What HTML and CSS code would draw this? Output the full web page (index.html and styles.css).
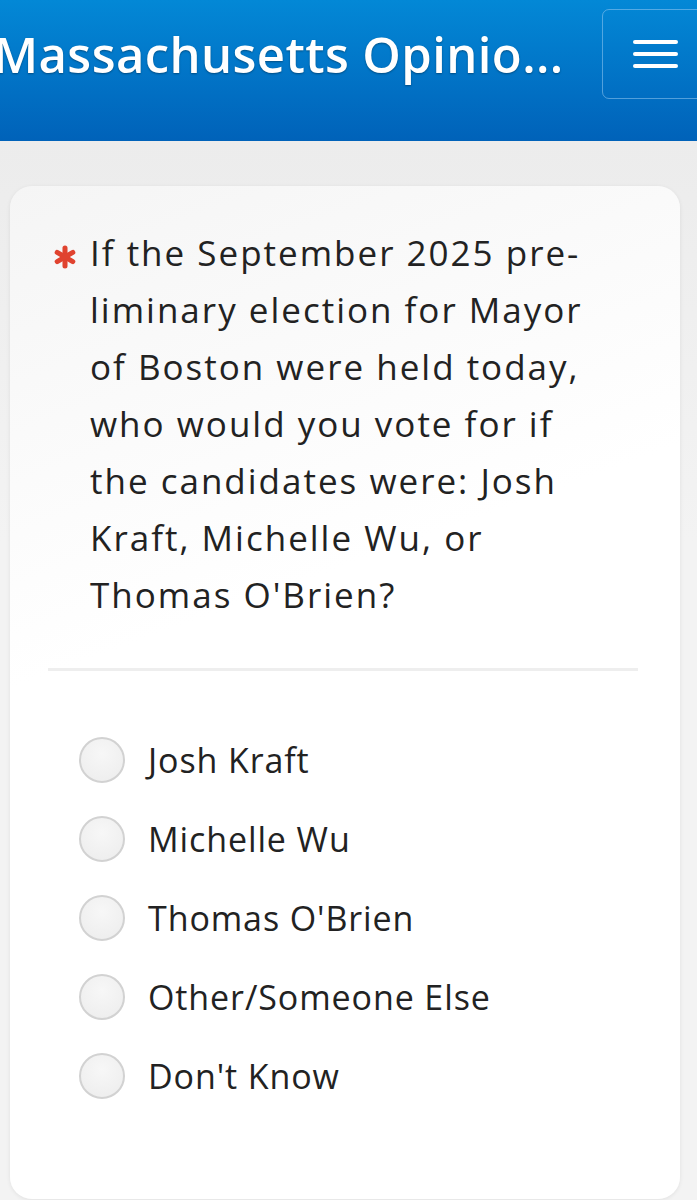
FILE: index.html
```html
<!DOCTYPE html>
<html>
<head>
<meta charset="utf-8">
<link rel="stylesheet" href="styles.css">
</head>
<body>
<header class="topbar">
  <div class="title">Massachusetts Opinio...</div>
  <button class="menu-btn" aria-label="Menu">
    <span class="bar"></span><span class="bar"></span><span class="bar"></span>
  </button>
</header>
<main class="page">
  <section class="card">
    <div class="question">
      <span class="req">
        <svg viewBox="0 0 20 20" width="24" height="24"><g stroke="#e0432f" stroke-width="4.2" stroke-linecap="round"><line x1="10" y1="2.5" x2="10" y2="17.5"/><line x1="3.5" y1="6.2" x2="16.5" y2="13.8"/><line x1="3.5" y1="13.8" x2="16.5" y2="6.2"/></g></svg>
      </span>
      <p class="qtext">If the September 2025 pre-<br>liminary election for Mayor<br>of Boston were held today,<br>who would you vote for if<br>the candidates were: Josh<br>Kraft, Michelle Wu, or<br>Thomas O'Brien?</p>
    </div>
    <hr class="divider">
    <ul class="options">
      <li class="option"><span class="radio"></span><span class="label">Josh Kraft</span></li>
      <li class="option"><span class="radio"></span><span class="label">Michelle Wu</span></li>
      <li class="option"><span class="radio"></span><span class="label">Thomas O'Brien</span></li>
      <li class="option"><span class="radio"></span><span class="label">Other/Someone Else</span></li>
      <li class="option"><span class="radio"></span><span class="label">Don't Know</span></li>
    </ul>
  </section>
</main>
</body>
</html>
```
FILE: styles.css
```css
* { box-sizing: border-box; }
html, body { margin: 0; padding: 0; }
body {
  font-family: "Open Sans", Roboto, sans-serif;
  background: #f1f1f1;
  width: 697px;
  height: 1200px;
  overflow: hidden;
}
.topbar {
  height: 141px;
  background: linear-gradient(#0388d6, #0062b9);
  display: flex;
  align-items: flex-start;
  justify-content: space-between;
  padding-top: 9px;
  overflow: hidden;
}
.title {
  margin-left: -7px;
  margin-top: 15px;
  color: #fff;
  font-size: 49px;
  line-height: 60px;
  font-weight: 600;
  letter-spacing: 0.4px;
  white-space: nowrap;
  text-shadow: 0 1px 2px rgba(0,0,0,0.35);
}
.menu-btn {
  width: 110px;
  height: 90px;
  margin-right: -15px;
  border: 1.5px solid rgba(150, 200, 240, 0.55);
  border-radius: 7px;
  background: transparent;
  display: flex;
  flex-direction: column;
  justify-content: center;
  gap: 8px;
  padding: 0 0 0 30px;
  flex: none;
}
.bar {
  display: block;
  width: 45px;
  height: 4px;
  background: #fff;
  border-radius: 2px;
}
.page {
  padding: 45px 17px 0 10px;
  background: linear-gradient(180deg, #ececec, #f3f3f3 400px);
  height: 1059px;
}
.card {
  background: linear-gradient(160deg, #f5f5f5 0%, #ffffff 40%);
  border-radius: 22px;
  box-shadow: 0 1px 4px rgba(0,0,0,0.08);
  padding: 38px 42px 100px 38px;
  min-height: 1009px;
}
.question {
  display: flex;
  gap: 13px;
}
.req {
  padding-top: 21px;
  padding-left: 5px;
  flex: none;
}
.req svg { display: block; }
.qtext {
  margin: 0;
  font-size: 35px;
  line-height: 57px;
  color: #222;
  letter-spacing: 2px;
  white-space: nowrap;
}
.divider {
  border: 0;
  height: 3px;
  background: #eeeeee;
  margin: 45px 0 0 0;
}
.options {
  list-style: none;
  margin: 0;
  padding: 66px 0 0 31px;
  display: flex;
  flex-direction: column;
  gap: 33px;
}
.option {
  display: flex;
  align-items: center;
  gap: 23px;
  height: 46px;
}
.radio {
  width: 46px;
  height: 46px;
  border-radius: 50%;
  border: 2px solid #d2d2d2;
  background: radial-gradient(circle at 50% 35%, #f7f7f7, #ececec);
  flex: none;
}
.label {
  font-size: 34px;
  color: #222;
  letter-spacing: 0.9px;
}
```
